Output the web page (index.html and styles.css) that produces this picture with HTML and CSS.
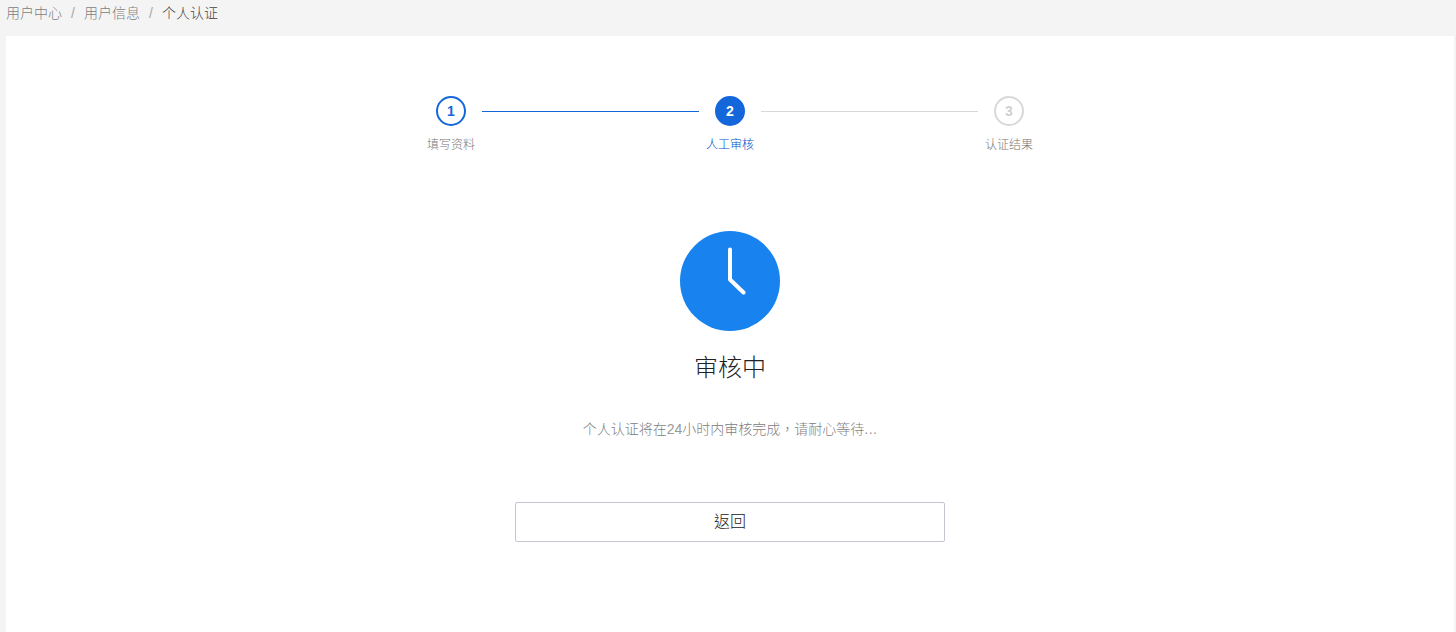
FILE: index.html
```html
<!DOCTYPE html>
<html lang="zh-CN">
<head>
<meta charset="utf-8">
<title>个人认证</title>
<link rel="stylesheet" href="styles.css">
</head>
<body>
<nav class="breadcrumb"><a>用户中心</a><span class="sep">/</span><a>用户信息</a><span class="sep">/</span><span class="current">个人认证</span></nav>
<main class="panel">
  <div class="steps">
    <div class="step done"><span class="num">1</span><span class="label">填写资料</span></div>
    <div class="line passed"></div>
    <div class="step active"><span class="num">2</span><span class="label">人工审核</span></div>
    <div class="line"></div>
    <div class="step"><span class="num">3</span><span class="label">认证结果</span></div>
  </div>
  <svg class="clock" viewBox="0 0 100 100"><circle cx="50" cy="50" r="50"/><path d="M50 18.500V48.500L63.500 61.500"/></svg>
  <h1 class="title">审核中</h1>
  <p class="desc">个人认证将在<span class="hours">24</span>小时内审核完成<span class="comma" lang="zh-TW">，</span>请耐心等待<span class="dots">...</span></p>
  <button class="back" lang="zh-TW">返回</button>
</main>
</body>
</html>
```
FILE: styles.css
```css
* { box-sizing: border-box; }
body {
  margin: 0;
  height: 632px;
  overflow: hidden;
  background: #f4f4f4;
  font-family: "Liberation Sans", "Noto Sans CJK SC", sans-serif;
  font-weight: 300;
}
.breadcrumb {
  display: flex;
  height: 36px;
  padding-left: 6px;
  font-size: 14px;
  line-height: 26px;
  color: #808080;
}
.sep { width: 22px; text-align: center; color: #a6a8ae; }
.current { color: #444; }
.panel {
  display: flex;
  flex-direction: column;
  align-items: center;
  width: 1448px;
  height: 596px;
  margin-left: 6px;
  padding-top: 60px;
  background: #fff;
}
.steps { display: flex; width: 606px; height: 60px; }
.step {
  display: flex;
  flex: none;
  flex-direction: column;
  align-items: center;
  width: 48px;
  color: #777;
}
.num {
  width: 30px;
  height: 30px;
  border: 2px solid #d8d8d8;
  border-radius: 50%;
  color: #d0d0d0;
  font-size: 14px;
  font-weight: 700;
  line-height: 26px;
  text-align: center;
}
.label { margin-top: 10px; font-size: 12px; line-height: 18px; white-space: nowrap; }
.done .num { border-color: #1467db; color: #1467db; }
.active { color: #004fc4; }
.active .num { border-color: #1467db; background: #1467db; color: #fff; }
.line { flex: none; width: 217px; height: 1px; margin: 15px 7px 0; background: #d8d8d8; }
.passed { background: #1467db; }
.clock { width: 100px; height: 100px; margin-top: 75px; }
.clock circle { fill: #1882ee; }
.clock path { fill: none; stroke: #fff; stroke-width: 4; stroke-linecap: round; stroke-linejoin: round; }
.title { margin: 19px 0 0; font-size: 24px; font-weight: 300; line-height: 36px; color: #222; }
.desc { margin: 33px 0 0; font-size: 14px; line-height: 20px; color: #808080; }
.hours { color: #999; }
.comma { font-family: "Noto Sans CJK TC", sans-serif; line-height: 1; }
.dots { letter-spacing: 0.4px; color: #999; }
.back {
  width: 430px;
  height: 40px;
  margin-top: 63px;
  padding: 0 0 5px;
  border: 1px solid #c3c6d1;
  border-radius: 2px;
  background: #fff;
  color: #222;
  font: 300 16px "Noto Sans CJK TC", sans-serif;
}
```
